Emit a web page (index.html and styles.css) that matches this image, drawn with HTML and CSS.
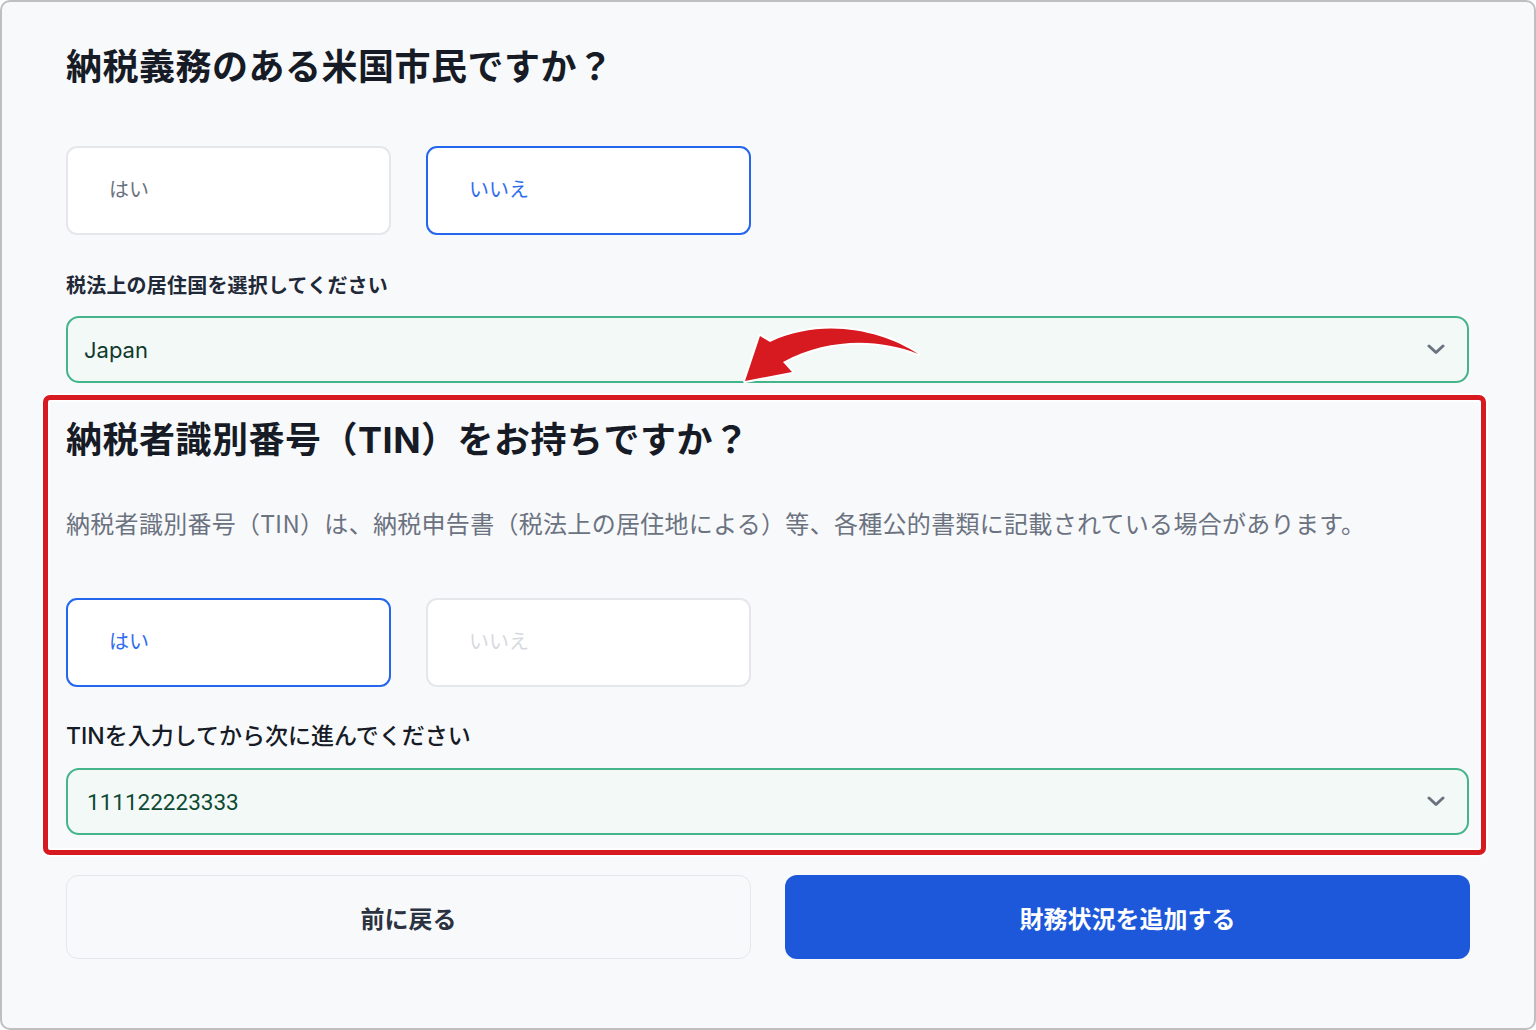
FILE: index.html
```html
<!DOCTYPE html>
<html lang="ja">
<head>
<meta charset="utf-8">
<title>TIN</title>
<link rel="stylesheet" href="styles.css">
</head>
<body>
<div class="frame">
  <h1 class="title">納税義務のある米国市民ですか？</h1>
  <div class="choices choices-first">
    <button class="choice">はい</button>
    <button class="choice selected">いいえ</button>
  </div>
  <label class="label">税法上の居住国を選択してください</label>
  <div class="select">
    <span class="select-value">Japan</span>
    <svg class="chev" width="18" height="11" viewBox="0 0 18 11"><path d="M2 2 L9 8.5 L16 2" fill="none" stroke="#6b7280" stroke-width="3" stroke-linecap="round" stroke-linejoin="round"/></svg>
  </div>
  <section class="highlight">
    <h2 class="title">納税者識別番号（TIN）をお持ちですか？</h2>
    <p class="desc">納税者識別番号（TIN）は、納税申告書（税法上の居住地による）等、各種公的書類に記載されている場合があります。</p>
    <div class="choices choices-second">
      <button class="choice selected">はい</button>
      <button class="choice faded">いいえ</button>
    </div>
    <label class="label label-tin">TINを入力してから次に進んでください</label>
    <div class="select select-tin">
      <span class="select-value tin-value">111122223333</span>
      <svg class="chev" width="18" height="11" viewBox="0 0 18 11"><path d="M2 2 L9 8.5 L16 2" fill="none" stroke="#6b7280" stroke-width="3" stroke-linecap="round" stroke-linejoin="round"/></svg>
    </div>
  </section>
  <div class="actions">
    <button class="btn btn-back">前に戻る</button>
    <button class="btn btn-primary">財務状況を追加する</button>
  </div>
  <svg class="arrow" width="1536" height="1030" viewBox="0 0 1536 1030">
    <path d="M918 354 C 885 332 825 316 770 342 L 760 336 L 745 381 L 792 372 L 783 362 C 828 338 878 338 918 354 Z" fill="#d71920" stroke="#ffffff" stroke-width="4" stroke-linejoin="round" paint-order="stroke"/>
  </svg>
</div>
</body>
</html>
```
FILE: styles.css
```css
* { box-sizing: border-box; }
html, body {
  margin: 0;
  padding: 0;
  background: #ffffff;
}
body {
  font-family: "Inter", "Noto Sans CJK JP", sans-serif;
  color: #1f2937;
}
.frame {
  position: relative;
  width: 1536px;
  height: 1030px;
  border: 2px solid #bfbfbf;
  border-radius: 10px;
  background: #f8f9fb;
  padding: 41px 65px 0 64px;
  overflow: hidden;
}
.title {
  margin: 0;
  font-size: 36px;
  line-height: 48px;
  font-weight: 700;
  letter-spacing: 0.5px;
  color: #161b26;
}
.choices {
  display: flex;
  gap: 35px;
}
.choices-first { margin-top: 55px; }
.choices-second { margin-top: 57px; }
.choice {
  width: 325px;
  height: 89px;
  background: #ffffff;
  border: 2px solid #e5e7eb;
  border-radius: 11px;
  padding: 0 0 4px 41px;
  text-align: left;
  font-family: "Noto Sans CJK JP", sans-serif;
  font-size: 20px;
  color: #6b7280;
}
.choice.selected {
  border: 2.5px solid #2467ee;
  color: #2f6cf0;
}
.choice.faded { color: #d6d9de; }
.label {
  display: block;
  margin-top: 36px;
  font-family: "Noto Sans CJK JP", sans-serif;
  font-size: 20px;
  line-height: 28px;
  font-weight: 700;
  letter-spacing: 0.2px;
  color: #1f2937;
}
.label-tin {
  margin-top: 35px;
  font-family: "Inter", "Noto Sans CJK JP", sans-serif;
  font-size: 23px;
  font-weight: 500;
  letter-spacing: 0;
  color: #161b26;
}
.select {
  margin-top: 17px;
  height: 67px;
  border: 2px solid #46b48a;
  border-radius: 13px;
  background: #f3f9f7;
  display: flex;
  align-items: center;
  justify-content: space-between;
  padding: 0 22px 0 16px;
}
.select-tin { margin-top: 18px; }
.select-value {
  font-size: 22px;
  color: #10392c;
}
.tin-value {
  font-family: "Roboto", sans-serif;
  font-size: 22.5px;
  padding-left: 3px;
  color: #0c4a33;
}
.chev { display: block; }
.highlight {
  margin: 12px -17px 0 -23px;
  padding: 16px 12px 15px 18px;
  border: 5px solid #d71920;
  border-radius: 7px;
  box-shadow: 0 0 0 2px #ffffff, inset 0 0 0 2px #ffffff;
}
.desc {
  margin: 41px 0 0 0;
  font-family: "Noto Sans CJK JP", sans-serif;
  font-size: 24px;
  line-height: 36px;
  font-weight: 400;
  letter-spacing: 0.3px;
  color: #6b7280;
}
.actions {
  display: grid;
  grid-template-columns: 685px 685px;
  gap: 34px;
  margin-top: 20px;
}
.btn {
  height: 84px;
  border-radius: 12px;
  font-family: "Noto Sans CJK JP", sans-serif;
  font-size: 24px;
  font-weight: 700;
}
.btn-back {
  background: #f8f9fb;
  border: 1.5px solid #e5e7eb;
  color: #2b3240;
}
.btn-primary {
  background: #1d58db;
  border: none;
  color: #ffffff;
}
.arrow {
  position: absolute;
  left: -2px;
  top: -2px;
  pointer-events: none;
}
```
